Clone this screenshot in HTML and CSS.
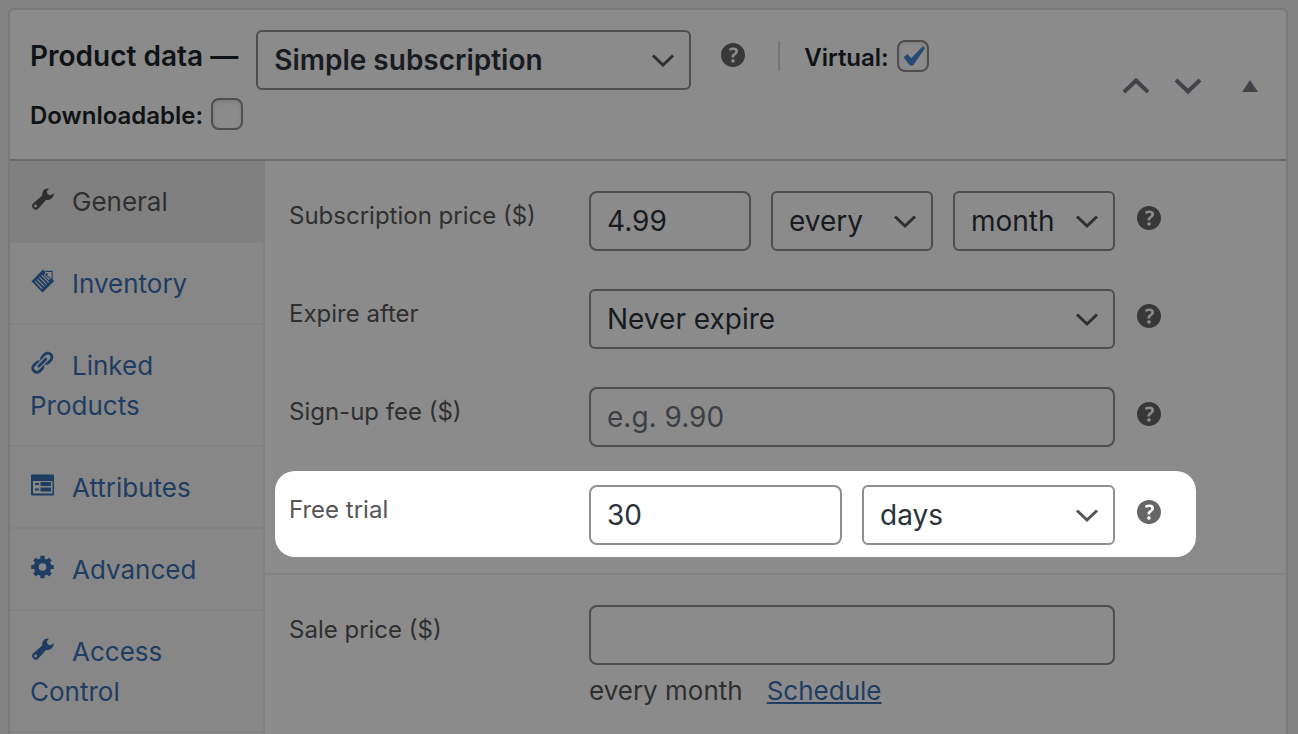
FILE: index.html
```html
<!DOCTYPE html>
<html lang="en">
<head>
<meta charset="utf-8">
<title>Product data</title>
<link rel="stylesheet" href="styles.css">
</head>
<body>
<svg class="sprite" aria-hidden="true">
  <symbol id="chevron" viewBox="0 0 24 24"><path d="M2 7.500l10 9.500 10-9.500" fill="none" stroke="currentColor" stroke-width="3"/></symbol>
  <symbol id="help" viewBox="3 3 14 14"><path fill="currentColor" d="M17 10c0-3.870-3.140-7-7-7-3.870 0-7 3.130-7 7s3.130 7 7 7c3.860 0 7-3.130 7-7zm-6.300 1.480H9.140v-.43c0-.38.08-.7.24-.98s.46-.57.88-.89c.41-.29.68-.53.81-.71.14-.18.2-.39.2-.62 0-.25-.09-.44-.28-.58-.19-.13-.45-.19-.79-.19-.58 0-1.250.19-2 .57l-.64-1.280c.87-.49 1.800-.74 2.770-.74.81 0 1.450.2 1.920.58.48.39.71.91.71 1.550 0 .43-.09.8-.29 1.110-.19.32-.57.67-1.110 1.060-.38.28-.61.49-.71.63-.1.15-.15.34-.15.57v.35zm-1.470 2.740c-.18-.17-.27-.42-.27-.73 0-.33.08-.58.26-.75s.43-.25.77-.25c.32 0 .57.09.75.26s.27.42.27.74c0 .3-.09.55-.27.72-.18.18-.43.27-.75.27-.33 0-.58-.09-.76-.26z"/></symbol>
  <symbol id="wrench" viewBox="0 0 24 24"><path fill="currentColor" fill-rule="evenodd" d="M19 1.700C14.800 1 11.800 4 12.200 8.500L3.300 16.300a3.600 3.600 0 1 0 5.100 5.100L16 13c4.500.6 8-2.500 7.700-6.700l-3.200 1.900-2.900-1-.8-3zM5.600 17.600a1.400 1.400 0 1 1 0 2.800 1.400 1.400 0 0 1 0-2.800z"/></symbol>
  <symbol id="inventory" viewBox="0 0 26 26"><path fill="currentColor" d="M13 .5L.5 13.200 12.500 25.500 25.200 13z"/><path d="M15.500 2.500h7.300v7.800l-2 1.800" fill="none" stroke="currentColor" stroke-width="1.300"/><path class="cut" d="M4.500 13.500l7.500 7.700M6.800 11.200l7.600 7.700M9.100 8.900l7.700 7.700M11.400 6.600l7.800 7.800" fill="none" stroke-width="1.200"/><path class="cut" d="M16 3.800h5.500v5.300l-2.300 2-4.500-4.500z" fill="none" stroke-width="1.100"/><path class="cut" d="M19 5.500v3.600M17.200 7.300h3.600" stroke-width="1"/></symbol>
  <symbol id="link" viewBox="1 1 18.500 18.500"><path fill="currentColor" d="M17.740 2.760c1.680 1.690 1.680 4.410 0 6.100l-1.530 1.520c-1.120 1.120-2.700 1.470-4.140 1.090l2.620-2.610.76-.77.76-.76c.84-.84.84-2.200 0-3.040-.84-.85-2.200-.85-3.040 0l-.77.76-3.380 3.380c-.37-1.440-.02-3.020 1.100-4.140l1.520-1.530c1.690-1.680 4.420-1.680 6.100 0zM8.590 13.430l5.340-5.340c.42-.42.42-1.100 0-1.520-.44-.43-1.130-.39-1.530 0l-5.330 5.340c-.42.42-.42 1.100 0 1.520.44.43 1.130.39 1.520 0zm-.76 2.290l4.140-4.150c.38 1.440.03 3.020-1.090 4.140l-1.520 1.530c-1.690 1.680-4.410 1.680-6.100 0-1.680-1.680-1.680-4.420 0-6.100l1.530-1.520c1.120-1.120 2.700-1.470 4.140-1.100l-4.140 4.150c-.85.84-.85 2.200 0 3.050.84.84 2.200.84 3.040 0z"/></symbol>
  <symbol id="attributes" viewBox="0 0 24 24"><path fill="currentColor" fill-rule="evenodd" d="M2 1.500h21a1 1 0 0 1 1 1v19a1 1 0 0 1-1 1H2a1 1 0 0 1-1-1v-19a1 1 0 0 1 1-1zM3 8v12.500h19.500V8z"/><path fill="currentColor" d="M5 10h4v2H5zM10.500 9h10.500v4H10.500zM5 15.500h4v2H5zM10.500 14.500h10.500v4H10.500z"/></symbol>
  <symbol id="gear" viewBox="0 0 24 24"><g fill="none" stroke="currentColor"><circle cx="12.500" cy="12" r="6.300" stroke-width="5"/><path stroke-width="4.200" d="M12.500.8v4M12.500 19.200v4M1.300 12h4M19.700 12h4M4.600 4.100l3 3M17.400 16.900l3 3M4.600 19.900l3-3M17.400 7.100l3-3"/></g></symbol>
</svg>

<main class="postbox">
  <header class="postbox-header">
    <div class="heading">
      <div class="heading-row">
        <h2 class="title"><label for="product-type">Product data —</label></h2>
        <div class="select product-type">
          <select id="product-type"><option>Simple subscription</option></select>
          <svg class="chevron"><use href="#chevron"/></svg>
        </div>
        <button class="help" type="button" aria-label="Product type help"><svg><use href="#help"/></svg></button>
        <div class="check virtual">
          <label for="virtual">Virtual:</label>
          <span class="box"><input type="checkbox" id="virtual" checked><svg class="tick" viewBox="0 0 32 32"><path fill="currentColor" d="M6.500 17.200l4-3.200 3.700 4.200L26 6l2 2.200-11.600 16.700q-2 1.600-4 0z"/></svg></span>
        </div>
      </div>
      <div class="check">
        <label for="downloadable">Downloadable:</label>
        <span class="box"><input type="checkbox" id="downloadable"></span>
      </div>
    </div>
    <div class="handles">
      <button type="button" aria-label="Move up"><svg class="order" viewBox="0 0 28 16"><path d="M2 14L14 2.500 26 14" fill="none" stroke="currentColor" stroke-width="4"/></svg></button>
      <button type="button" aria-label="Move down"><svg class="order" viewBox="0 0 28 16"><path d="M2 2l12 11.500L26 2" fill="none" stroke="currentColor" stroke-width="4"/></svg></button>
      <button type="button" aria-label="Toggle panel"><svg class="toggle" viewBox="0 0 16 12"><path d="M8 0l8 12H0z" fill="currentColor"/></svg></button>
    </div>
  </header>

  <div class="content">
    <nav class="tabs">
      <a class="tab active" href="#general"><svg class="tab-icon"><use href="#wrench"/></svg>General</a>
      <a class="tab" href="#inventory-data"><svg class="tab-icon wide"><use href="#inventory"/></svg>Inventory</a>
      <a class="tab" href="#linked"><svg class="tab-icon"><use href="#link"/></svg>Linked Products</a>
      <a class="tab" href="#attributes-data"><svg class="tab-icon"><use href="#attributes"/></svg>Attributes</a>
      <a class="tab" href="#advanced"><svg class="tab-icon"><use href="#gear"/></svg>Advanced</a>
      <a class="tab" href="#access"><svg class="tab-icon"><use href="#wrench"/></svg>Access Control</a>
    </nav>

    <form class="panel" id="general">
      <section class="group">
        <div class="row">
          <label for="price">Subscription price ($)</label>
          <div class="fields">
            <input class="field" type="text" id="price" value="4.99">
            <div class="select"><select aria-label="Billing interval"><option>every</option></select><svg class="chevron"><use href="#chevron"/></svg></div>
            <div class="select"><select aria-label="Billing period"><option>month</option></select><svg class="chevron"><use href="#chevron"/></svg></div>
          </div>
          <button class="help" type="button" aria-label="Subscription price help"><svg><use href="#help"/></svg></button>
        </div>
        <div class="row">
          <label for="expire">Expire after</label>
          <div class="fields">
            <div class="select"><select id="expire"><option>Never expire</option></select><svg class="chevron"><use href="#chevron"/></svg></div>
          </div>
          <button class="help" type="button" aria-label="Expire after help"><svg><use href="#help"/></svg></button>
        </div>
        <div class="row">
          <label for="fee">Sign-up fee ($)</label>
          <div class="fields"><input class="field" type="text" id="fee" placeholder="e.g. 9.90"></div>
          <button class="help" type="button" aria-label="Sign-up fee help"><svg><use href="#help"/></svg></button>
        </div>
        <div class="row spotlight">
          <label for="trial">Free trial</label>
          <div class="fields">
            <input class="field" type="text" id="trial" value="30">
            <div class="select"><select aria-label="Trial period"><option>days</option></select><svg class="chevron"><use href="#chevron"/></svg></div>
          </div>
          <button class="help" type="button" aria-label="Free trial help"><svg><use href="#help"/></svg></button>
        </div>
      </section>
      <section class="group">
        <div class="row">
          <label for="sale">Sale price ($)</label>
          <div class="sale">
            <input class="field" type="text" id="sale">
            <p class="note"><span>every month</span><a href="#schedule">Schedule</a></p>
          </div>
        </div>
      </section>
    </form>
  </div>
</main>
</body>
</html>
```

FILE: styles.css
```css
:root {
  --page: #838383;
  --surface: #8b8b8b;
  --tab-bg: #878787;
  --tab-active: #808080;
  --line: #828282;
  --frame: #797979;
  --rule: #6c6c6c;
  --field-line: #4e4e4f;
  --field-text: #181b1f;
  --strong: #101316;
  --text: #2f2f2f;
  --help: #383838;
  --placeholder: #3c3f43;
  --link: #1f3d63;
}

* {
  box-sizing: border-box;
}

body {
  margin: 0;
  padding: 8px 10px 0 8px;
  min-height: 100vh;
  display: flex;
  flex-direction: column;
  background: var(--page);
  color: var(--text);
  font-family: Inter, "Liberation Sans", sans-serif;
  font-size: 24px;
}

.sprite {
  display: none;
}

button {
  display: block;
  padding: 0;
  border: 0;
  background: none;
  color: inherit;
}

svg {
  display: block;
}

.postbox {
  flex: 1;
  display: flex;
  flex-direction: column;
  border: 2px solid var(--frame);
  border-bottom: 0;
  border-radius: 6px 6px 0 0;
  background: var(--surface);
}

.postbox-header {
  display: flex;
  justify-content: space-between;
  align-items: center;
  padding: 20px 28px 29px 20px;
  border-bottom: 2px solid var(--rule);
  color: var(--strong);
}

.heading {
  display: flex;
  flex-direction: column;
  gap: 8px;
}

.heading-row {
  display: flex;
  align-items: flex-start;
}

.title {
  margin: 0 18px 0 0;
  font-size: 28px;
  font-weight: 600;
  line-height: 52px;
}

.product-type {
  width: 435px;
  margin-right: 30px;
}

.product-type select {
  font-weight: 600;
}

.heading .help {
  padding: 13px 0;
}

.check {
  display: flex;
  align-items: center;
  gap: 8px;
  height: 32px;
  font-weight: 600;
  line-height: 32px;
}

.check label {
  padding-top: 4px;
}

.virtual {
  margin: 11px 0 0 33px;
  height: 30px;
  padding-left: 24px;
  border-left: 2px solid #777777;
}

.box {
  display: grid;
}

.box > * {
  grid-area: 1 / 1;
  width: 32px;
  height: 32px;
  margin: 0;
}

.box input {
  appearance: none;
  border: 2px solid var(--field-line);
  border-radius: 8px;
  box-shadow: inset 0 2px 4px rgba(0, 0, 0, 0.1);
}

.tick {
  color: #274a75;
  pointer-events: none;
}

.handles {
  display: flex;
  align-items: center;
  gap: 24px;
  padding-top: 12px;
  color: #414348;
}

.order {
  width: 28px;
  height: 16px;
}

.toggle {
  width: 16px;
  height: 12px;
  margin-left: 16px;
}

.content {
  flex: 1;
  display: flex;
}

.tabs {
  flex: 0 0 255px;
  background: var(--tab-bg);
  border-right: 2px solid var(--line);
}

.tab {
  display: block;
  padding: 21px 20px 19px;
  border-bottom: 2px solid var(--line);
  color: var(--link);
  font-size: 26px;
  line-height: 40px;
  text-decoration: none;
}

.tab.active {
  margin-right: -2px;
  background: var(--tab-active);
  border-color: var(--tab-active);
  color: var(--text);
}

.tab-icon {
  display: inline-block;
  width: 24px;
  height: 24px;
  margin-right: 18px;
  vertical-align: baseline;
}

.tab-icon.wide {
  width: 26px;
  margin-right: 16px;
  overflow: visible;
}

.cut {
  stroke: var(--tab-bg);
}

.panel {
  flex: 1;
  min-width: 0;
}

.group {
  display: flex;
  flex-direction: column;
  gap: 12px;
  padding: 16px 10px;
}

.group + .group {
  border-top: 2px solid var(--line);
}

.row {
  display: grid;
  grid-template-columns: 300px minmax(0, 526px) 24px;
  align-items: start;
  max-width: 921px;
  padding: 14px 35px 12px 14px;
}

.row label {
  line-height: 50px;
}

.row .help {
  margin-left: 22px;
  padding: 15px 0;
}

.help,
.heading .help {
  color: var(--help);
}

.help svg {
  width: 24px;
  height: 24px;
}

.fields {
  display: grid;
  grid-auto-flow: column;
  grid-auto-columns: minmax(0, 1fr);
  gap: 20px;
}

.field,
select {
  width: 100%;
  height: 60px;
  margin: 0;
  padding: 0 16px;
  border: 2px solid var(--field-line);
  border-radius: 8px;
  background: none;
  color: var(--field-text);
  font: 400 28px/40px Inter, "Liberation Sans", sans-serif;
}

select {
  appearance: none;
  border-radius: 6px;
}

.field::placeholder {
  color: var(--placeholder);
  opacity: 1;
}

.select {
  display: grid;
  align-items: center;
}

.select > * {
  grid-area: 1 / 1;
}

.chevron {
  justify-self: end;
  width: 24px;
  height: 24px;
  margin-right: 16px;
  color: var(--text);
  pointer-events: none;
}

.spotlight {
  --field-line: #8c8f94;
  --field-text: #2c3338;
  --text: #555555;
  --help: #666666;
  border-radius: 20px;
  background: #ffffff;
  color: var(--text);
}

.note {
  display: flex;
  gap: 24px;
  margin: 10px 0 0;
  font-size: 26px;
  line-height: 32px;
}

.note a {
  color: var(--link);
}
```
